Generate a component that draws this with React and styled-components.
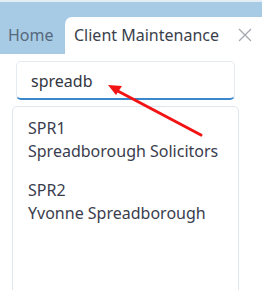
import React from "react";
import styled, { createGlobalStyle } from "styled-components";

const Global = createGlobalStyle`
  html, body {
    margin: 0;
    padding: 0;
    background: #fff;
  }
  body {
    font-family: "Noto Sans", "Open Sans", sans-serif;
    width: 262px;
    height: 290px;
    overflow: hidden;
  }
`;

const Page = styled.div`
  position: relative;
  width: 262px;
  height: 290px;
  overflow: hidden;
`;

const TabBar = styled.div`
  display: flex;
  align-items: flex-end;
  height: 52px;
  background: #a7cbe4;
  border-top: 2px solid #e4edf4;
`;

const HomeTab = styled.div`
  width: 65px;
  height: 37px;
  box-sizing: border-box;
  padding: 7px 0 0 8px;
  font-size: 16px;
  color: #56697c;
`;

const ActiveTab = styled.div`
  flex: 1;
  display: flex;
  align-items: flex-start;
  justify-content: space-between;
  height: 37px;
  box-sizing: border-box;
  padding: 7px 10px 0 9px;
  background: #fff;
  border-radius: 7px 0 0 0;
  font-size: 16px;
  color: #3a3f4c;
`;

const CloseIcon = styled.svg`
  margin-top: 4px;
  flex-shrink: 0;
`;

const Content = styled.div`
  display: flex;
  flex-direction: column;
  gap: 6px;
  padding: 7px 23px 0 12px;
`;

const SearchBox = styled.div`
  margin-left: 4px;
  width: 219px;
  height: 39px;
  box-sizing: border-box;
  padding: 8px 0 0 14px;
  border: 1px solid #e6ebf1;
  border-bottom: 2px solid #3a87cc;
  border-radius: 5px;
  font-size: 16px;
  color: #33363f;
`;

const ResultList = styled.div`
  width: 227px;
  height: 200px;
  box-sizing: border-box;
  padding: 10px 0 0 15px;
  border: 1px solid #dfe6ee;
  border-radius: 5px;
  display: flex;
  flex-direction: column;
  gap: 16px;
`;

const ResultItem = styled.div`
  font-size: 16px;
  line-height: 23px;
  color: #3a3d4d;
`;

const Arrow = styled.svg`
  position: absolute;
  left: 0;
  top: 0;
  pointer-events: none;
`;

const results = [
  { code: "SPR1", name: "Spreadborough Solicitors" },
  { code: "SPR2", name: "Yvonne Spreadborough" },
];

export default function App() {
  return (
    <Page>
      <Global />
      <TabBar>
        <HomeTab>Home</HomeTab>
        <ActiveTab>
          <span>Client Maintenance</span>
          <CloseIcon width="14" height="14" viewBox="0 0 14 14">
            <path d="M1 1L13 13M13 1L1 13" stroke="#a3a8af" strokeWidth="1.3" fill="none" />
          </CloseIcon>
        </ActiveTab>
      </TabBar>
      <Content>
        <SearchBox>spreadb</SearchBox>
        <ResultList>
          {results.map((r) => (
            <ResultItem key={r.code}>
              <div>{r.code}</div>
              <div>{r.name}</div>
            </ResultItem>
          ))}
        </ResultList>
      </Content>
      <Arrow width="262" height="290" viewBox="0 0 262 290">
        <line x1="201" y1="135" x2="114" y2="89" stroke="#f21414" strokeWidth="3" strokeLinecap="round" />
        <polygon points="108,85 122,86 116,95" fill="#f21414" />
      </Arrow>
    </Page>
  );
}
